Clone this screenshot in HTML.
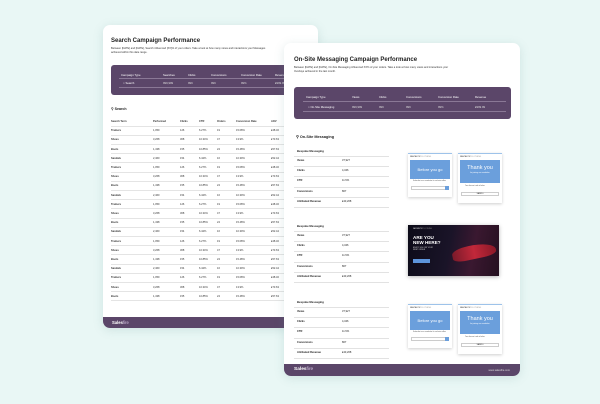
<!DOCTYPE html>
<html><head><meta charset="utf-8"><style>
*{margin:0;padding:0;box-sizing:border-box}
body{width:600px;height:404px;background:#e9f7f5;position:relative;overflow:hidden;font-family:"Liberation Sans",sans-serif;color:#222}
.pg{position:absolute;background:#fff;border-radius:7px;overflow:hidden;box-shadow:0 2px 10px rgba(90,140,140,.18)}
.a{position:absolute;white-space:nowrap}
.ft{position:absolute;left:0;right:0;bottom:0;background:#5b4669;color:#fff}
.pb{position:absolute;background:#5b4669;border-radius:3px}
.t{font-size:3.2px;color:#333}
.b{font-weight:bold}
.ln{position:absolute;height:0;border-top:0.5px solid #e2e2e2}
.pop{position:absolute;background:#fff;box-shadow:0 1px 3px rgba(0,0,0,.2);border-top:1px solid #9ec3ea}
.blue{position:absolute;left:2px;right:2px;background:#6b9fdc;color:#fff;text-align:center}
</style></head><body>

<!-- back page -->
<div class="pg" style="left:103px;top:25px;width:215px;height:303px">
 <div class="a b" style="left:8px;top:13px;font-size:6px;color:#222">Search Campaign Performance</div>
 <div class="a t" style="left:8px;top:22px;font-size:2.6px">Between [DATE] and [DATE], Search influenced [XX]% of your orders. Take a look at how many views and interactions your Messages</div>
 <div class="a t" style="left:8px;top:26px;font-size:2.6px">achieved within this date range.</div>
 <div class="pb" style="left:8px;top:40px;width:215px;height:30px"></div>
 <div class="a" style="left:18px;top:48px;font-size:2.8px;color:#fff">Campaign Type</div>
 <div class="a" style="left:60px;top:48px;font-size:2.8px;color:#fff">Searches</div>
 <div class="a" style="left:85px;top:48px;font-size:2.8px;color:#fff">Clicks</div>
 <div class="a" style="left:108px;top:48px;font-size:2.8px;color:#fff">Conversions</div>
 <div class="a" style="left:138px;top:48px;font-size:2.8px;color:#fff">Conversion Rate</div>
 <div class="a" style="left:172px;top:48px;font-size:2.8px;color:#fff">Revenue</div>
 <div class="ln" style="left:16px;width:200px;top:53px;border-color:#8a7896"></div>
 <div class="a" style="left:20px;top:56px;font-size:2.8px;color:#fff">○ Search</div>
 <div class="a" style="left:60px;top:56px;font-size:2.8px;color:#ddd">999,999</div>
 <div class="a" style="left:85px;top:56px;font-size:2.8px;color:#ddd">999</div>
 <div class="a" style="left:108px;top:56px;font-size:2.8px;color:#ddd">999</div>
 <div class="a" style="left:138px;top:56px;font-size:2.8px;color:#ddd">99%</div>
 <div class="a" style="left:172px;top:56px;font-size:2.8px;color:#ddd">£999.99</div>
 <div class="ln" style="left:16px;width:200px;top:62px;border-color:#8a7896"></div>
 <div class="a b" style="left:8px;top:82px;font-size:3.6px">⚲ Search</div>
 <div style="position:absolute;left:8px;top:93px;width:210px;font-size:2.6px;color:#333" id="bt">
 </div>
 <div class="ft" style="height:11px"><div class="a b" style="left:9px;top:3px;font-size:4.2px">Sales<span style="font-weight:normal;color:#d8c8e6">fire</span></div></div>
</div>

<!-- front page -->
<div class="pg" style="left:284px;top:43px;width:236px;height:333px">
 <div class="a b" style="left:10px;top:14px;font-size:6px">On-Site Messaging Campaign Performance</div>
 <div class="a t" style="left:10px;top:23px;font-size:2.6px">Between [DATE] and [DATE], On-Site Messaging influenced XX% of your orders. Take a look at how many views and interactions your</div>
 <div class="a t" style="left:10px;top:27px;font-size:2.6px">Overlays achieved in the last month.</div>
 <div class="pb" style="left:10px;top:44px;width:217px;height:32px"></div>
 <div class="a" style="left:22px;top:52px;font-size:2.8px;color:#fff">Campaign Type</div>
 <div class="a" style="left:68px;top:52px;font-size:2.8px;color:#fff">Views</div>
 <div class="a" style="left:95px;top:52px;font-size:2.8px;color:#fff">Clicks</div>
 <div class="a" style="left:122px;top:52px;font-size:2.8px;color:#fff">Conversions</div>
 <div class="a" style="left:154px;top:52px;font-size:2.8px;color:#fff">Conversion Rate</div>
 <div class="a" style="left:191px;top:52px;font-size:2.8px;color:#fff">Revenue</div>
 <div class="ln" style="left:19px;width:203px;top:58px;border-color:#8a7896"></div>
 <div class="a" style="left:24px;top:62px;font-size:2.8px;color:#fff">○ On-Site Messaging</div>
 <div class="a" style="left:68px;top:62px;font-size:2.8px;color:#ddd">999,999</div>
 <div class="a" style="left:95px;top:62px;font-size:2.8px;color:#ddd">999</div>
 <div class="a" style="left:122px;top:62px;font-size:2.8px;color:#ddd">999</div>
 <div class="a" style="left:154px;top:62px;font-size:2.8px;color:#ddd">99%</div>
 <div class="a" style="left:191px;top:62px;font-size:2.8px;color:#ddd">£999.99</div>
 <div class="ln" style="left:19px;width:203px;top:68px;border-color:#8a7896"></div>
 <div class="a b" style="left:12px;top:91px;font-size:3.8px">⚲ On-Site Messaging</div>

 <!-- section tables -->
 <div id="s1"></div>

 <!-- popups set 1 -->
 <div class="pop" style="left:124px;top:110px;width:44px;height:44px">
  <div class="a" style="left:2px;top:1.5px;font-size:2px;color:#333">FANTASTIC<span style="color:#999">CLOTHING</span></div>
  <div class="blue" style="top:6px;height:19px;font-size:4px;line-height:19px">Before you go</div>
  <div class="a" style="left:5px;top:27px;font-size:1.6px;color:#555">Subscribe to our newsletter for exclusive offers</div>
  <div style="position:absolute;left:3px;top:32px;width:38px;height:4px;border:0.5px solid #ccc"></div>
  <div style="position:absolute;left:37px;top:32px;width:4px;height:4px;background:#6b9fdc"></div>
 </div>
 <div class="pop" style="left:174px;top:110px;width:44px;height:50px">
  <div class="a" style="left:2px;top:1.5px;font-size:2px;color:#333">FANTASTIC<span style="color:#999">CLOTHING</span></div>
  <div class="blue" style="top:6px;height:23px;"><div style="font-size:5.5px;margin-top:5px">Thank you</div><div style="font-size:1.8px;margin-top:1px">for joining our newsletter</div></div>
  <div class="a" style="left:7px;top:32px;font-size:1.6px;color:#555">Your discount code is below</div>
  <div style="position:absolute;left:3px;top:38px;width:38px;height:4px;border:0.5px solid #ccc;font-size:1.8px;text-align:center;line-height:3px">SAVE10</div>
 </div>

 <!-- banner -->
 <div style="position:absolute;left:124px;top:182px;width:91px;height:51px;background:linear-gradient(100deg,#0c0b18 0%,#1a1428 45%,#3a1830 70%,#251020 100%);box-shadow:0 1px 4px rgba(0,0,0,.3)">
  <div style="position:absolute;left:44px;top:20px;width:44px;height:14px;border-radius:40% 60% 30% 30%;background:linear-gradient(90deg,#7a1a2a,#c2283a,#8a1828);transform:rotate(-12deg)"></div>
  <div class="a" style="left:5px;top:3px;font-size:1.8px;color:#ddd">FANTASTIC<span style="color:#888">CLOTHING</span></div>
  <div class="a b" style="left:5px;top:10px;font-size:4.6px;color:#fff;line-height:5px">ARE YOU<br>NEW HERE?</div>
  <div class="a" style="left:5px;top:22px;font-size:1.8px;color:#ddd;line-height:2.2px">ENJOY 10% OFF YOUR<br>FIRST ORDER</div>
  <div style="position:absolute;left:5px;top:34px;width:17px;height:4px;background:#5d95db"></div>
 </div>

 <!-- popups set 2 -->
 <div class="pop" style="left:124px;top:261px;width:44px;height:44px">
  <div class="a" style="left:2px;top:1.5px;font-size:2px;color:#333">FANTASTIC<span style="color:#999">CLOTHING</span></div>
  <div class="blue" style="top:6px;height:19px;font-size:4px;line-height:19px">Before you go</div>
  <div class="a" style="left:5px;top:27px;font-size:1.6px;color:#555">Subscribe to our newsletter for exclusive offers</div>
  <div style="position:absolute;left:3px;top:32px;width:38px;height:4px;border:0.5px solid #ccc"></div>
  <div style="position:absolute;left:37px;top:32px;width:4px;height:4px;background:#6b9fdc"></div>
 </div>
 <div class="pop" style="left:174px;top:261px;width:44px;height:50px">
  <div class="a" style="left:2px;top:1.5px;font-size:2px;color:#333">FANTASTIC<span style="color:#999">CLOTHING</span></div>
  <div class="blue" style="top:6px;height:23px;"><div style="font-size:5.5px;margin-top:5px">Thank you</div><div style="font-size:1.8px;margin-top:1px">for joining our newsletter</div></div>
  <div class="a" style="left:7px;top:32px;font-size:1.6px;color:#555">Your discount code is below</div>
  <div style="position:absolute;left:3px;top:38px;width:38px;height:4px;border:0.5px solid #ccc;font-size:1.8px;text-align:center;line-height:3px">SAVE10</div>
 </div>

 <div class="ft" style="height:12px"><div class="a b" style="left:10px;top:3px;font-size:4.8px">Sales<span style="font-weight:normal;color:#d8c8e6">fire</span></div><div class="a" style="right:10px;top:4.5px;font-size:2.6px;color:#ddd">www.salesfire.com</div></div>
</div>

<script>
// back table
var bt=document.getElementById('bt'),h='';
var cols=[0,42,69,88,106,125,160];
var hd=['Search Term','Performed','Clicks','CTR','Orders','Conversion Rate','AOV'];
function row(c,y,bold){var s='';for(var i=0;i<7;i++)s+='<div style="position:absolute;left:'+cols[i]+'px;top:'+y+'px;white-space:nowrap;'+(bold||i==0?'font-weight:bold;':'')+'">'+c[i]+'</div>';return s+'<div style="position:absolute;left:0;width:210px;top:'+(y+5.5)+'px;border-top:0.5px solid #e4e4e4"></div>';}
h+=row(hd,2,1);
var d=[['Trainers','1,059','126','6.27%','19','15.08%','£48.32'],['Shoes','3,268','308','10.34%','47','13.9%','£73.63'],['Boots','1,438','155','10.85%','24','15.48%','£57.63'],['Sandals','2,460','154','6.42%','16','10.39%','£52.44']];
for(var r=0;r<19;r++)h+=row(d[r%4],11.2+r*9.2);
bt.innerHTML=h;
// front sections
var s='',ys=[106,181,257];
var lab=['Views','Clicks','CTR','Conversions','Attributed Revenue'],val=['37,927','4,346','11.5%','807','£43,208'];
ys.forEach(function(y){s+='<div class="a b" style="left:13px;top:'+y+'px;font-size:2.8px">Bespoke Messaging</div>';
for(var i=0;i<5;i++){var yy=y+10+i*10.2;s+='<div style="position:absolute;left:10px;width:95px;top:'+(yy-3)+'px;border-top:0.5px solid #e2e2e2"></div><div class="a b" style="left:13px;top:'+yy+'px;font-size:2.6px">'+lab[i]+'</div><div class="a" style="left:58px;top:'+yy+'px;font-size:2.6px">'+val[i]+'</div>';}
s+='<div style="position:absolute;left:10px;width:95px;top:'+(y+58)+'px;border-top:0.5px solid #e2e2e2"></div>';});
document.getElementById('s1').outerHTML=s;
</script>
</body></html>
